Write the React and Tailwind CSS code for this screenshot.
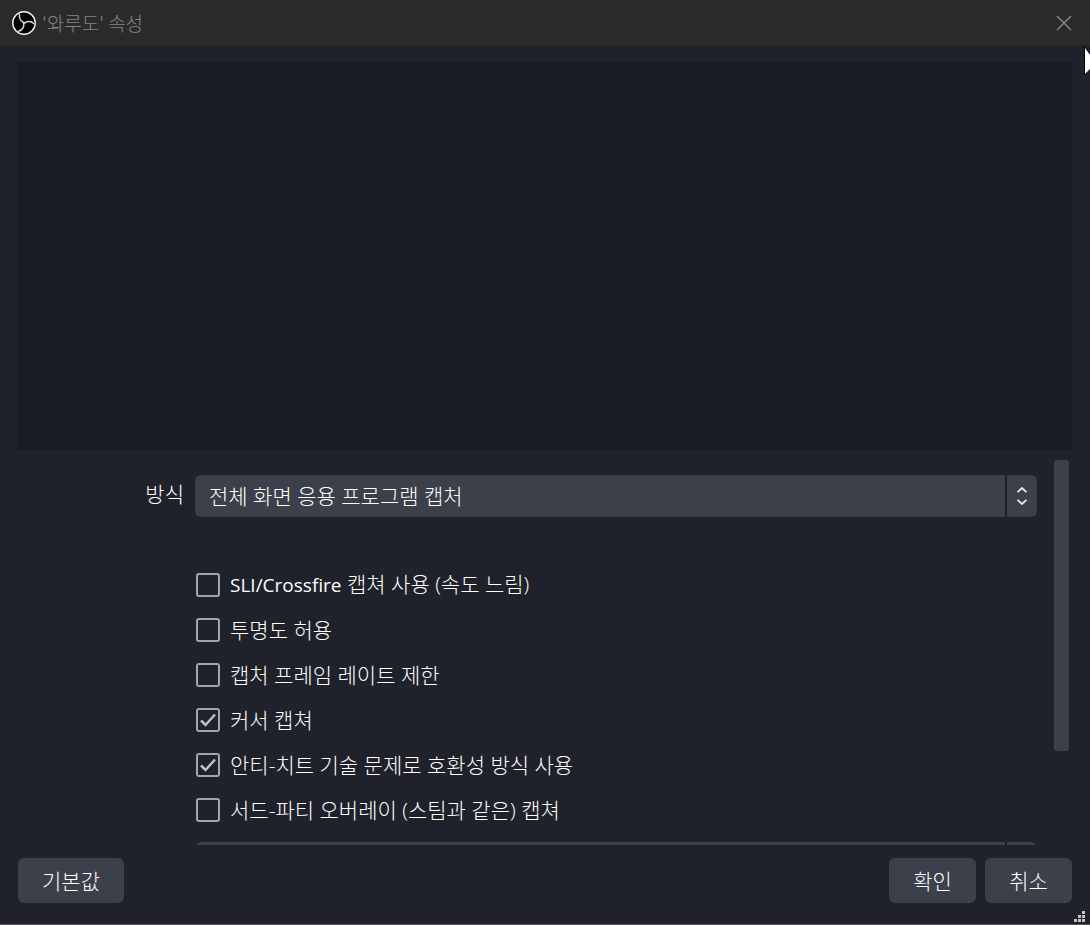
import { useState } from "react";

const OPTIONS = [
  { id: "sli", latin: "SLI/Crossfire", label: " 캡쳐 사용 (속도 느림)", checked: false },
  { id: "alpha", label: "투명도 허용", checked: false },
  { id: "limit", label: "캡처 프레임 레이트 제한", checked: false },
  { id: "cursor", label: "커서 캡쳐", checked: true },
  { id: "anticheat", label: "안티-치트 기술 문제로 호환성 방식 사용", checked: true },
  { id: "overlay", label: "서드-파티 오버레이 (스팀과 같은) 캡쳐", checked: false },
];

const BLADE = "M12 12C11.6 10.8 9.8 11 8.6 9.2C7.4 7.4 6.8 5.6 7.6 3.4";

function ObsLogo() {
  return (
    <svg viewBox="0 0 24 24" className="size-6 shrink-0" aria-hidden="true">
      <circle cx="12" cy="12" r="11.2" fill="#000" stroke="#f4f4f4" strokeWidth="1.4" />
      <g fill="none" stroke="#d4d4d4" strokeWidth="1.5" strokeLinecap="round">
        <path d={BLADE} />
        <path d={BLADE} transform="rotate(120 12 12)" />
        <path d={BLADE} transform="rotate(240 12 12)" />
      </g>
      <circle cx="12" cy="12" r="1.3" fill="#d4d4d4" />
    </svg>
  );
}

function Combo({ id, label, children }) {
  return (
    <div className="grid h-[42px] grid-cols-1">
      <select
        id={id}
        aria-label={label}
        className="col-start-1 row-start-1 w-full appearance-none rounded-md bg-[#3c404b] pr-10 pl-[14px] text-white outline-none"
      >
        {children}
      </select>
      <span className="pointer-events-none col-start-1 row-start-1 flex w-8 items-center justify-center justify-self-end border-l-2 border-[#1f222a]">
        <svg viewBox="0 0 12 20" className="h-5 w-3" fill="none" stroke="#e4e6ec" strokeWidth="1.8" aria-hidden="true">
          <path d="M1.5 6.2L6 2L10.5 6.2M1.5 13.8L6 18L10.5 13.8" />
        </svg>
      </span>
    </div>
  );
}

function Option({ option }) {
  const [checked, setChecked] = useState(option.checked);
  return (
    <div className="flex h-[45px] items-center">
      <span className="grid size-6 shrink-0">
        <input
          id={option.id}
          type="checkbox"
          checked={checked}
          onChange={() => setChecked(!checked)}
          className="col-start-1 row-start-1 size-6 appearance-none rounded-[3px] border-2 border-[#a4a5ab]"
        />
        {checked && (
          <svg viewBox="0 0 24 24" className="pointer-events-none col-start-1 row-start-1 size-6" fill="none" stroke="#c0c0c3" strokeWidth="2.5" aria-hidden="true">
            <path d="M5 12.5L9.5 17L19 6.5" />
          </svg>
        )}
      </span>
      <label htmlFor={option.id} className="pl-[10px] whitespace-pre">
        {option.latin && <span className="text-[19px] font-normal">{option.latin}</span>}
        {option.label}
      </label>
    </div>
  );
}

function DialogButton({ className, children }) {
  return (
    <button type="button" className={`h-[45px] rounded-md bg-[#3c404b] text-white ${className}`}>
      {children}
    </button>
  );
}

export default function App() {
  return (
    <div className="relative flex h-screen flex-col overflow-hidden border-b border-[#5b565c] bg-[#1f222a] font-['Open_Sans','Noto_Sans_CJK_KR',sans-serif] text-[21px] leading-[30px] font-light text-white">
      <header className="flex h-[45px] shrink-0 items-center bg-[#2b2b2b] pr-[18px] pl-3">
        <ObsLogo />
        <h1 className="flex-1 pl-[6px] font-['Noto_Sans_CJK_KR',sans-serif] text-[19px] text-[#858585]">'와루도' 속성</h1>
        <button type="button" aria-label="닫기">
          <svg viewBox="0 0 16 16" className="size-4" stroke="#929292" strokeWidth="1.2" aria-hidden="true">
            <path d="M1 1L15 15M15 1L1 15" />
          </svg>
        </button>
      </header>

      <main className="flex min-h-0 flex-1 flex-col px-[18px] pt-[17px]">
        <div className="min-h-0 flex-1 bg-[#191b26]" />

        <div className="mt-[10px] flex h-[385px] shrink-0 overflow-hidden">
          <form className="grid flex-1 grid-cols-[166px_1fr] content-start gap-x-[11px] pt-[15px] pr-[17px]">
            <label htmlFor="mode" className="pt-1 text-right">방식</label>
            <Combo id="mode">
              <option>전체 화면 응용 프로그램 캡처</option>
            </Combo>
            <div className="col-start-2 flex flex-col pt-[45px] pl-px">
              {OPTIONS.map((option) => (
                <Option key={option.id} option={option} />
              ))}
            </div>
            <div className="col-start-2 pt-[10px]">
              <Combo id="hook" label="후크 속도">
                <option></option>
              </Combo>
            </div>
          </form>
          <div className="mr-[3px] h-[291px] w-[15px] rounded-[3px] bg-[#3c404b]" />
        </div>
      </main>

      <footer className="flex shrink-0 gap-[9px] px-[18px] pt-[13px] pb-[21px]">
        <DialogButton className="mr-auto w-[106px]">기본값</DialogButton>
        <DialogButton className="w-[87px]">확인</DialogButton>
        <DialogButton className="w-[87px]">취소</DialogButton>
      </footer>

      <svg viewBox="0 0 11 11" className="absolute right-[5px] bottom-[2px] size-[11px]" fill="#c4c4c6" aria-hidden="true">
        <path d="M8 0h3v3h-3zM4 4h3v3h-3zM8 4h3v3h-3zM0 8h3v3h-3zM4 8h3v3h-3zM8 8h3v3h-3z" />
      </svg>
      <svg viewBox="0 0 20 30" className="absolute top-[46px] -right-[14px] h-[30px] w-5" fill="#fff" stroke="#000" aria-hidden="true">
        <path d="M.5 .5V29L7 22.5H16.5Z" />
      </svg>
    </div>
  );
}
